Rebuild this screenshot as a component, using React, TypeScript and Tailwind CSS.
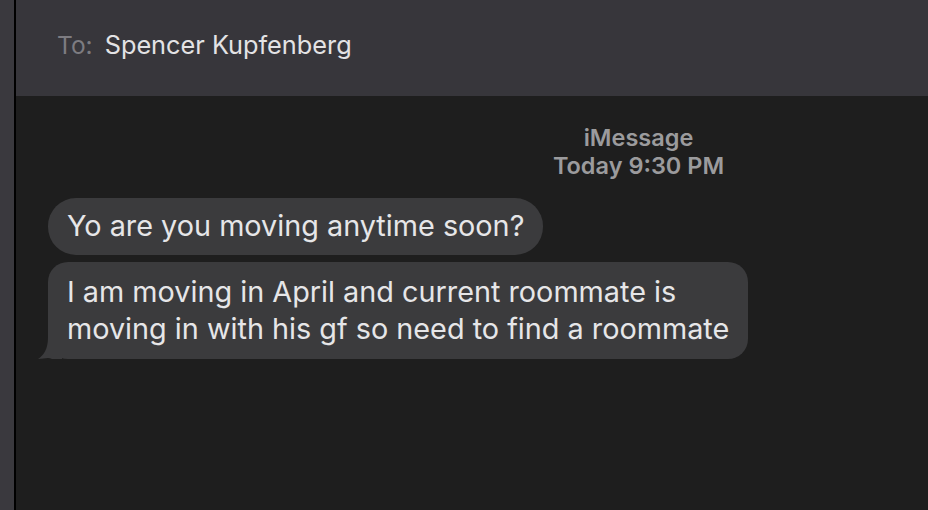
import React from "react";

export default function App() {
  return (
    <div
      className="flex h-[510px] w-[928px] overflow-hidden bg-[#1e1e1e]"
      style={{ fontFamily: "Inter, 'Noto Sans', sans-serif" }}
    >
      <div className="h-full w-[14px] shrink-0 bg-[#3a393e]" />
      <div className="h-full w-[2px] shrink-0 bg-black" />
      <div className="flex min-w-0 flex-1 flex-col">
        <div className="flex h-[96px] shrink-0 items-center bg-[#37363b] pl-[41px] pb-[6px]">
          <span className="text-[24.5px] text-[#7d7c81]">To:</span>
          <span className="ml-[12px] text-[25.3px] text-[#e3e3e5]">Spencer Kupfenberg</span>
        </div>
        <div className="flex flex-col pt-[28px]">
          <div className="flex flex-col items-center pl-[333px] text-[23.5px] font-semibold leading-[28px] text-[#9b9b9d]">
            <span>iMessage</span>
            <span>Today 9:30 PM</span>
          </div>
          <div className="mt-[18px] flex flex-col items-start gap-[7px] pl-[32px]">
            <div className="rounded-[28px] bg-[#3b3b3d] px-[19px] pt-[11px] pb-[12px] text-[28.8px] leading-[34px] text-[#e6e6e8]">
              Yo are you moving anytime soon?
            </div>
            <div className="relative rounded-[20px] bg-[#3b3b3d] px-[19px] pt-[11px] pb-[12px] text-[28.8px] leading-[37px] text-[#e6e6e8]">
              I am moving in April and current roommate is
              <br />
              moving in with his gf so need to find a roommate
              <svg
                className="absolute bottom-0 left-[-10px]"
                width="30"
                height="22"
                viewBox="0 0 30 22"
              >
                <path
                  d="M10 0 L24 0 L24 22 L14 22 C10 20 6 22 0 22 C6 18 10 12 10 0 Z"
                  fill="#3b3b3d"
                />
              </svg>
            </div>
          </div>
        </div>
      </div>
    </div>
  );
}
